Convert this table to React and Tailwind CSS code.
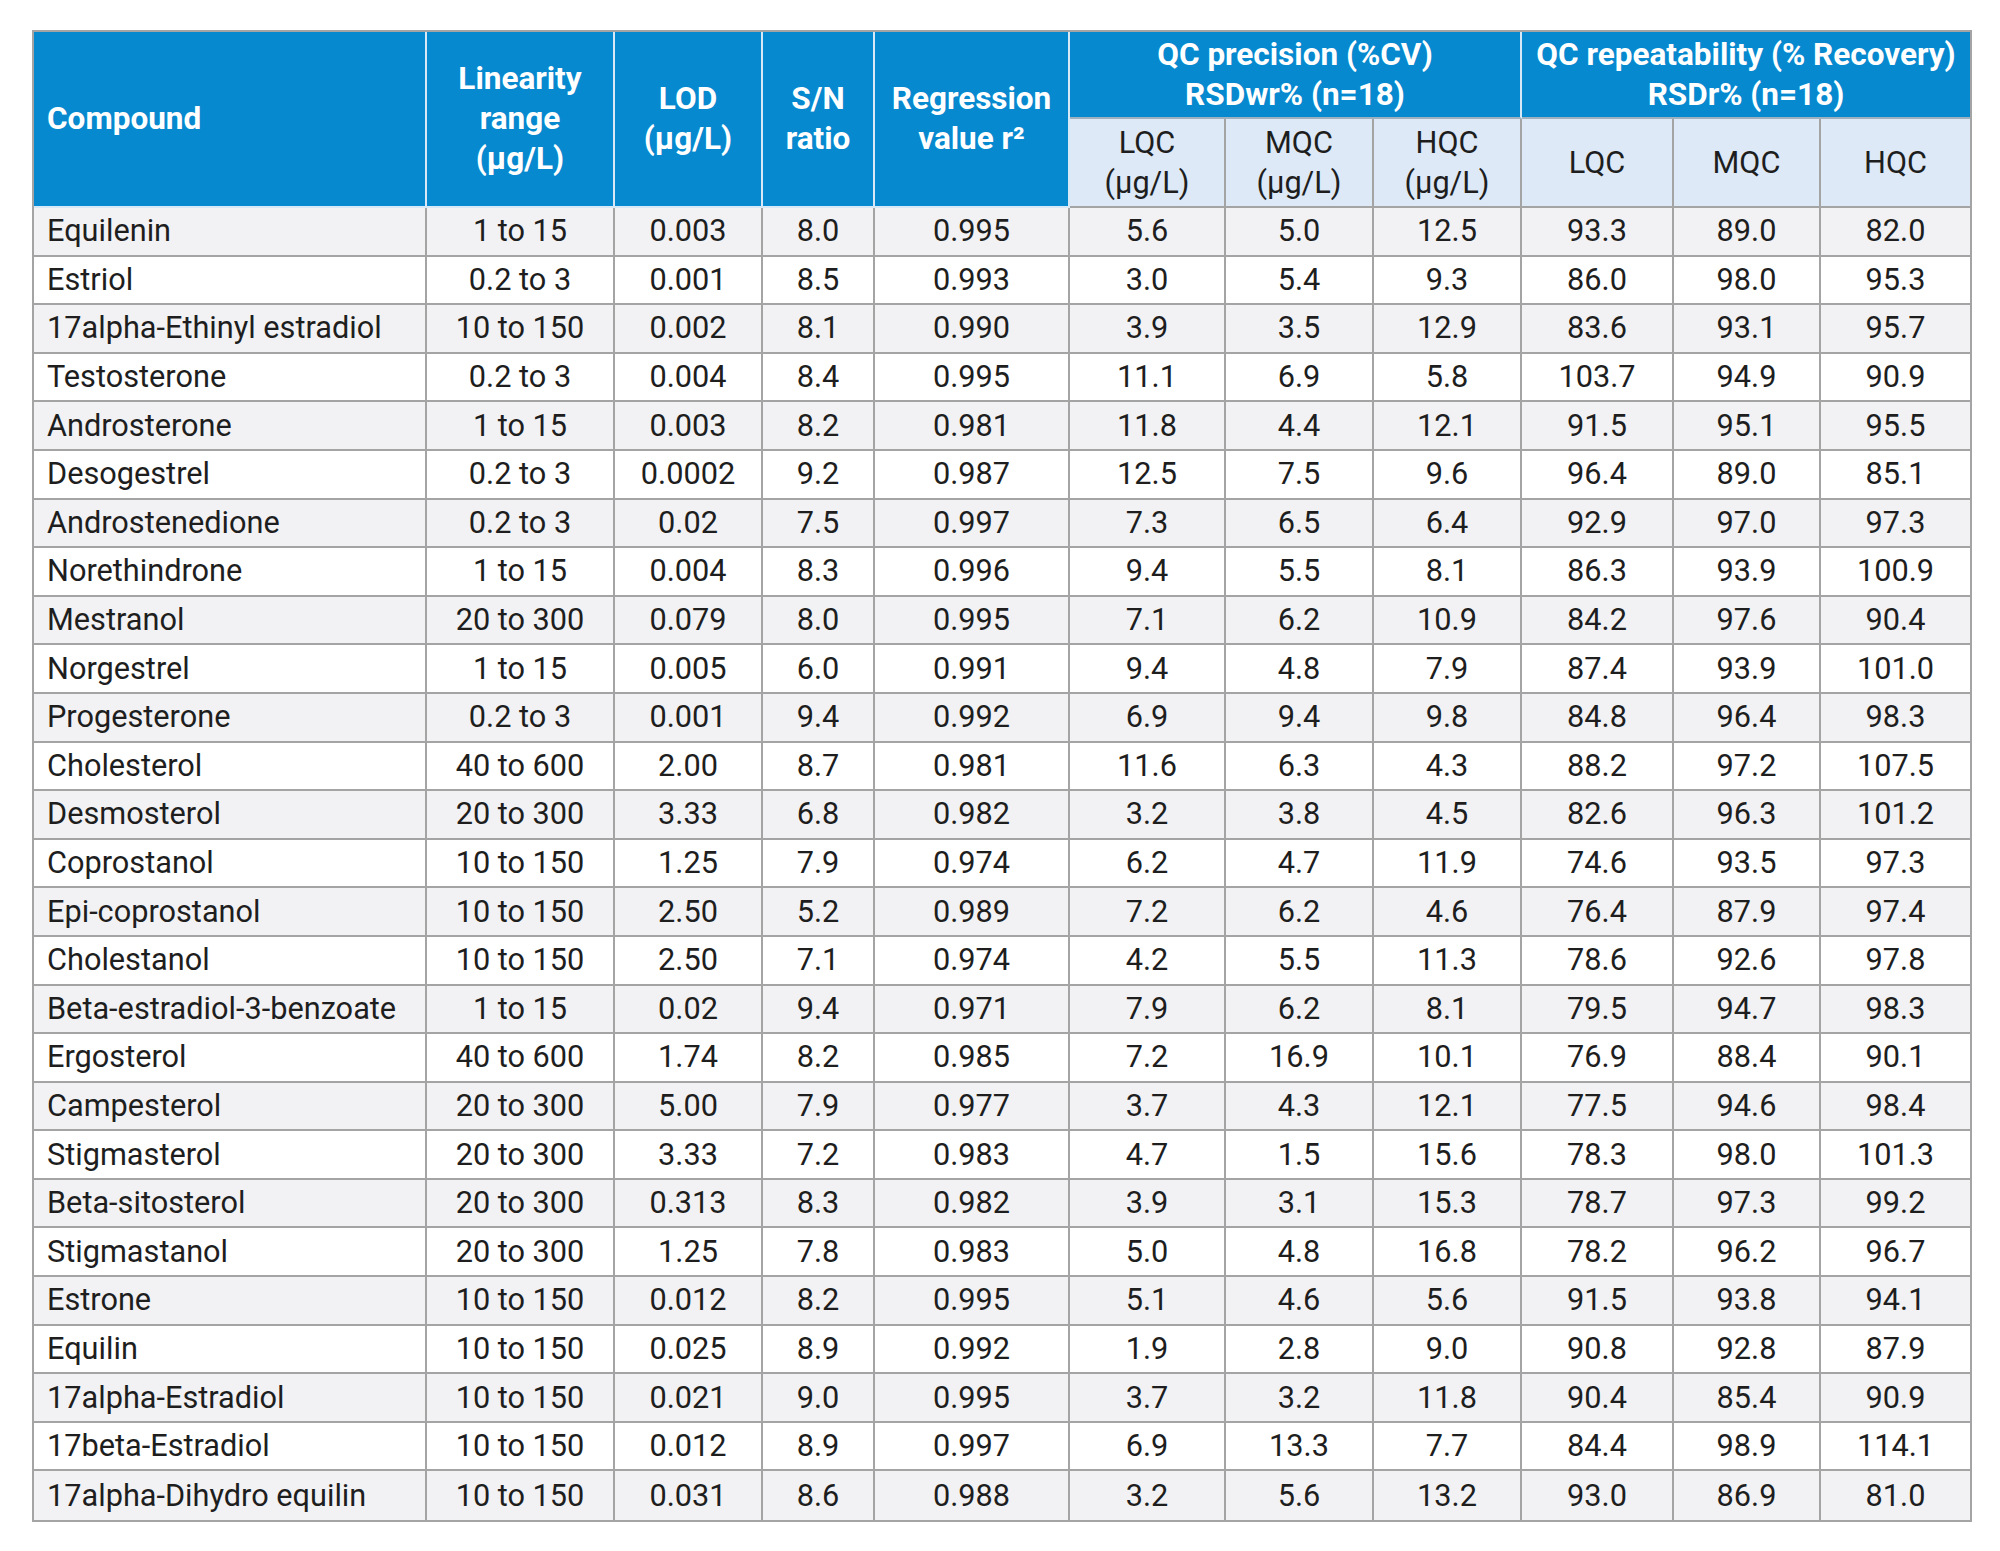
import React from "react";

const rows = [
  ["Equilenin","1 to 15","0.003","8.0","0.995","5.6","5.0","12.5","93.3","89.0","82.0"],
  ["Estriol","0.2 to 3","0.001","8.5","0.993","3.0","5.4","9.3","86.0","98.0","95.3"],
  ["17alpha-Ethinyl estradiol","10 to 150","0.002","8.1","0.990","3.9","3.5","12.9","83.6","93.1","95.7"],
  ["Testosterone","0.2 to 3","0.004","8.4","0.995","11.1","6.9","5.8","103.7","94.9","90.9"],
  ["Androsterone","1 to 15","0.003","8.2","0.981","11.8","4.4","12.1","91.5","95.1","95.5"],
  ["Desogestrel","0.2 to 3","0.0002","9.2","0.987","12.5","7.5","9.6","96.4","89.0","85.1"],
  ["Androstenedione","0.2 to 3","0.02","7.5","0.997","7.3","6.5","6.4","92.9","97.0","97.3"],
  ["Norethindrone","1 to 15","0.004","8.3","0.996","9.4","5.5","8.1","86.3","93.9","100.9"],
  ["Mestranol","20 to 300","0.079","8.0","0.995","7.1","6.2","10.9","84.2","97.6","90.4"],
  ["Norgestrel","1 to 15","0.005","6.0","0.991","9.4","4.8","7.9","87.4","93.9","101.0"],
  ["Progesterone","0.2 to 3","0.001","9.4","0.992","6.9","9.4","9.8","84.8","96.4","98.3"],
  ["Cholesterol","40 to 600","2.00","8.7","0.981","11.6","6.3","4.3","88.2","97.2","107.5"],
  ["Desmosterol","20 to 300","3.33","6.8","0.982","3.2","3.8","4.5","82.6","96.3","101.2"],
  ["Coprostanol","10 to 150","1.25","7.9","0.974","6.2","4.7","11.9","74.6","93.5","97.3"],
  ["Epi-coprostanol","10 to 150","2.50","5.2","0.989","7.2","6.2","4.6","76.4","87.9","97.4"],
  ["Cholestanol","10 to 150","2.50","7.1","0.974","4.2","5.5","11.3","78.6","92.6","97.8"],
  ["Beta-estradiol-3-benzoate","1 to 15","0.02","9.4","0.971","7.9","6.2","8.1","79.5","94.7","98.3"],
  ["Ergosterol","40 to 600","1.74","8.2","0.985","7.2","16.9","10.1","76.9","88.4","90.1"],
  ["Campesterol","20 to 300","5.00","7.9","0.977","3.7","4.3","12.1","77.5","94.6","98.4"],
  ["Stigmasterol","20 to 300","3.33","7.2","0.983","4.7","1.5","15.6","78.3","98.0","101.3"],
  ["Beta-sitosterol","20 to 300","0.313","8.3","0.982","3.9","3.1","15.3","78.7","97.3","99.2"],
  ["Stigmastanol","20 to 300","1.25","7.8","0.983","5.0","4.8","16.8","78.2","96.2","96.7"],
  ["Estrone","10 to 150","0.012","8.2","0.995","5.1","4.6","5.6","91.5","93.8","94.1"],
  ["Equilin","10 to 150","0.025","8.9","0.992","1.9","2.8","9.0","90.8","92.8","87.9"],
  ["17alpha-Estradiol","10 to 150","0.021","9.0","0.995","3.7","3.2","11.8","90.4","85.4","90.9"],
  ["17beta-Estradiol","10 to 150","0.012","8.9","0.997","6.9","13.3","7.7","84.4","98.9","114.1"],
  ["17alpha-Dihydro equilin","10 to 150","0.031","8.6","0.988","3.2","5.6","13.2","93.0","86.9","81.0"],
];

const blueHead =
  "bg-[#0789cf] text-white font-bold text-[31.5px] flex items-center justify-center text-center leading-[40px] border-r-2 border-b-2 border-r-[#d7e9f6] border-b-[#d7e9f6]";
const subHead =
  "bg-[#dde9f6] text-[#1e1e1e] flex items-center justify-center text-center leading-[40px] border-r-2 border-b-2 border-[#a4a4a4]";

export default function App() {
  return (
    <div className="bg-white w-[2000px] h-[1551px] pt-[30px] pl-[32px]" style={{ fontFamily: "Roboto, 'Liberation Sans', sans-serif" }}>
      <div className="w-[1940px] border-2 border-[#a4a4a4] grid grid-cols-[393px_188px_148px_112px_195px_156px_148px_148px_152px_147px_149px] grid-rows-[87px_89px_repeat(27,48.6px)] text-[30.7px] text-[#1e1e1e]">
        <div className={blueHead + " row-span-2 !justify-start pl-[13px]"}>Compound</div>
        <div className={blueHead + " row-span-2"}>Linearity<br />range<br />(µg/L)</div>
        <div className={blueHead + " row-span-2"}>LOD<br />(µg/L)</div>
        <div className={blueHead + " row-span-2"}>S/N<br />ratio</div>
        <div className={blueHead + " row-span-2"}>Regression<br />value r²</div>
        <div className={blueHead + " col-span-3 !border-b-[#9fb0bf]"}>QC precision (%CV)<br />RSDwr% (n=18)</div>
        <div className={blueHead + " col-span-3 !border-r-0 !border-b-[#9fb0bf]"}>QC repeatability (% Recovery)<br />RSDr% (n=18)</div>
        <div className={subHead}>LQC<br />(µg/L)</div>
        <div className={subHead}>MQC<br />(µg/L)</div>
        <div className={subHead}>HQC<br />(µg/L)</div>
        <div className={subHead}>LQC</div>
        <div className={subHead}>MQC</div>
        <div className={subHead + " !border-r-0"}>HQC</div>
        {rows.map((r, i) => (
          <React.Fragment key={i}>
            {r.map((c, j) => (
              <div
                key={j}
                className={
                  (i % 2 === 0 ? "bg-[#f2f2f4] " : "bg-white ") +
                  "flex items-center border-[#a4a4a4] whitespace-nowrap " +
                  (j === 0 ? "justify-start pl-[13px] " : "justify-center ") +
                  (j === 10 ? "border-r-0 " : "border-r-2 ") +
                  (i === rows.length - 1 ? "border-b-0" : "border-b-2")
                }
              >
                {c}
              </div>
            ))}
          </React.Fragment>
        ))}
      </div>
    </div>
  );
}
